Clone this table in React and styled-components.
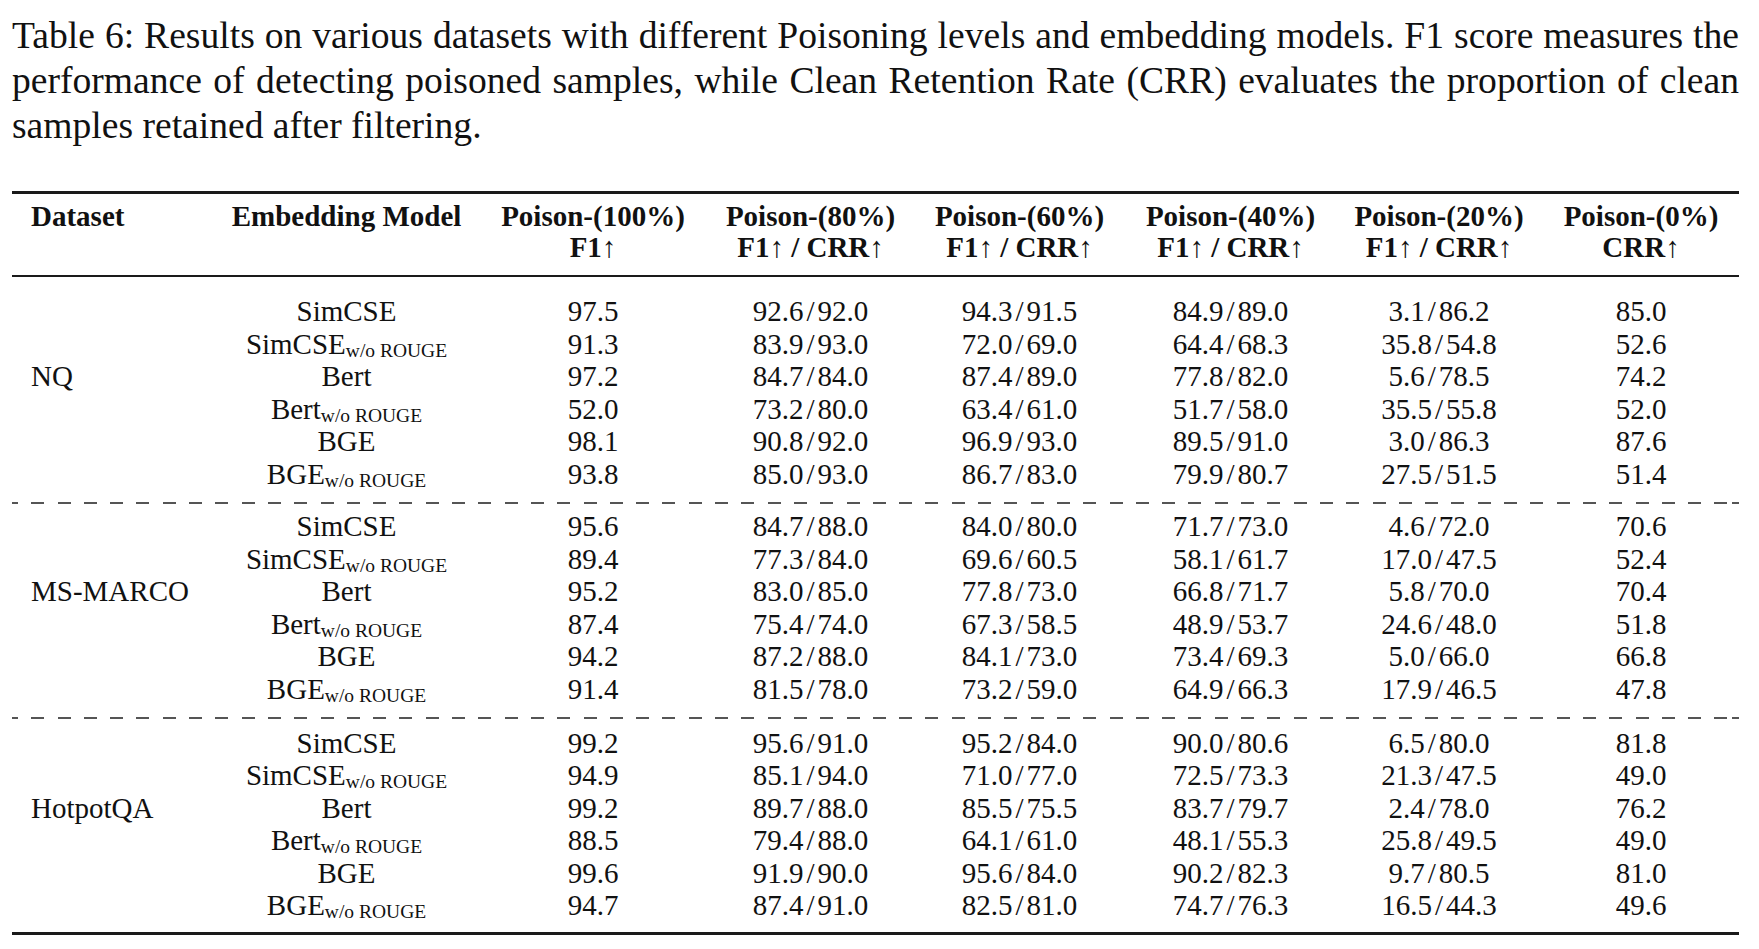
import React from "react";
import styled, { createGlobalStyle } from "styled-components";

const Global = createGlobalStyle`
  html, body { margin: 0; padding: 0; background: #fff; }
  body { font-family: "Liberation Serif", "Times New Roman", serif; color: #111; }
`;

const Page = styled.div`
  width: 1727px;
  padding: 13px 0 0 12px;
`;

const Caption = styled.div`
  font-size: 37.6px;
  line-height: 45px;
`;

const CapLine = styled.div`
  white-space: nowrap;
  text-align: ${(p) => (p.$last ? "left" : "justify")};
  text-align-last: ${(p) => (p.$last ? "left" : "justify")};
`;

const Table = styled.div`
  margin-top: 43px;
  font-size: 29px;
`;

const Rule = styled.div`
  height: ${(p) => p.$h}px;
  background: #1a1a1a;
`;

const Dash = styled.div`
  height: 2px;
  background-image: repeating-linear-gradient(
    to right,
    #555 0,
    #555 13px,
    transparent 13px,
    transparent 26.3px
  );
  background-position: -7px 0;
`;

const Section = styled.div`
  padding: ${(p) => p.$pt}px 0 ${(p) => p.$pb}px;
`;

const Row = styled.div`
  display: grid;
  grid-template-columns: 203px 263px 230px 205px 213px 209px 208px 196px;
  line-height: ${(p) => (p.$head ? "31px" : "32.5px")};
  font-weight: ${(p) => (p.$head ? 700 : 400)};
  white-space: nowrap;
`;

const Cell = styled.div`
  text-align: center;
`;

const DataCell = styled.div`
  text-align: left;
  padding-left: 19px;
`;

const Sub = styled.span`
  font-size: 19.5px;
  line-height: 0;
  vertical-align: -3px;
`;

const Slash = styled.span`
  padding: 0 3px;
`;

const Arrow = styled.span`
  font-weight: 400;
`;

const Num = ({ v }) => {
  if (!v.includes("/")) return v;
  const [a, b] = v.split("/");
  return (
    <>
      {a}
      <Slash>/</Slash>
      {b}
    </>
  );
};

const Model = ({ name, wo }) => (
  <>
    {name}
    {wo && <Sub>w/o ROUGE</Sub>}
  </>
);

const models = [
  ["SimCSE", false],
  ["SimCSE", true],
  ["Bert", false],
  ["Bert", true],
  ["BGE", false],
  ["BGE", true],
];

const groups = [
  {
    name: "NQ",
    rows: [
      ["97.5", "92.6/92.0", "94.3/91.5", "84.9/89.0", "3.1/86.2", "85.0"],
      ["91.3", "83.9/93.0", "72.0/69.0", "64.4/68.3", "35.8/54.8", "52.6"],
      ["97.2", "84.7/84.0", "87.4/89.0", "77.8/82.0", "5.6/78.5", "74.2"],
      ["52.0", "73.2/80.0", "63.4/61.0", "51.7/58.0", "35.5/55.8", "52.0"],
      ["98.1", "90.8/92.0", "96.9/93.0", "89.5/91.0", "3.0/86.3", "87.6"],
      ["93.8", "85.0/93.0", "86.7/83.0", "79.9/80.7", "27.5/51.5", "51.4"],
    ],
  },
  {
    name: "MS-MARCO",
    rows: [
      ["95.6", "84.7/88.0", "84.0/80.0", "71.7/73.0", "4.6/72.0", "70.6"],
      ["89.4", "77.3/84.0", "69.6/60.5", "58.1/61.7", "17.0/47.5", "52.4"],
      ["95.2", "83.0/85.0", "77.8/73.0", "66.8/71.7", "5.8/70.0", "70.4"],
      ["87.4", "75.4/74.0", "67.3/58.5", "48.9/53.7", "24.6/48.0", "51.8"],
      ["94.2", "87.2/88.0", "84.1/73.0", "73.4/69.3", "5.0/66.0", "66.8"],
      ["91.4", "81.5/78.0", "73.2/59.0", "64.9/66.3", "17.9/46.5", "47.8"],
    ],
  },
  {
    name: "HotpotQA",
    rows: [
      ["99.2", "95.6/91.0", "95.2/84.0", "90.0/80.6", "6.5/80.0", "81.8"],
      ["94.9", "85.1/94.0", "71.0/77.0", "72.5/73.3", "21.3/47.5", "49.0"],
      ["99.2", "89.7/88.0", "85.5/75.5", "83.7/79.7", "2.4/78.0", "76.2"],
      ["88.5", "79.4/88.0", "64.1/61.0", "48.1/55.3", "25.8/49.5", "49.0"],
      ["99.6", "91.9/90.0", "95.6/84.0", "90.2/82.3", "9.7/80.5", "81.0"],
      ["94.7", "87.4/91.0", "82.5/81.0", "74.7/76.3", "16.5/44.3", "49.6"],
    ],
  },
];

const heads = ["100", "80", "60", "40", "20", "0"];

const Up = () => <Arrow>↑</Arrow>;

const Group = ({ g, pt, pb }) => (
  <Section $pt={pt} $pb={pb}>
    {g.rows.map((r, i) => (
      <Row key={i}>
        <DataCell>{i === 2 ? g.name : ""}</DataCell>
        <Cell>
          <Model name={models[i][0]} wo={models[i][1]} />
        </Cell>
        {r.map((v, j) => (
          <Cell key={j}>
            <Num v={v} />
          </Cell>
        ))}
      </Row>
    ))}
  </Section>
);

export default function App() {
  return (
    <>
      <Global />
      <Page>
        <Caption>
          <CapLine>
            Table 6: Results on various datasets with different Poisoning levels and embedding models. F1 score measures the
          </CapLine>
          <CapLine>
            performance of detecting poisoned samples, while Clean Retention Rate (CRR) evaluates the proportion of clean
          </CapLine>
          <CapLine $last>samples retained after filtering.</CapLine>
        </Caption>
        <Table>
          <Rule $h={3} />
          <Section $pt={7} $pb={12}>
            <Row $head>
              <DataCell>Dataset</DataCell>
              <Cell>Embedding Model</Cell>
              {heads.map((h) => (
                <Cell key={h}>Poison-({h}%)</Cell>
              ))}
            </Row>
            <Row $head>
              <DataCell />
              <Cell />
              <Cell>
                F1<Up />
              </Cell>
              {[0, 1, 2, 3].map((k) => (
                <Cell key={k}>
                  F1<Up /> / CRR<Up />
                </Cell>
              ))}
              <Cell>
                CRR<Up />
              </Cell>
            </Row>
          </Section>
          <Rule $h={2} />
          <Group g={groups[0]} pt={18} pb={12} />
          <Dash />
          <Group g={groups[1]} pt={6} pb={12} />
          <Dash />
          <Group g={groups[2]} pt={7.6} pb={10} />
          <Rule $h={3} />
        </Table>
      </Page>
    </>
  );
}
